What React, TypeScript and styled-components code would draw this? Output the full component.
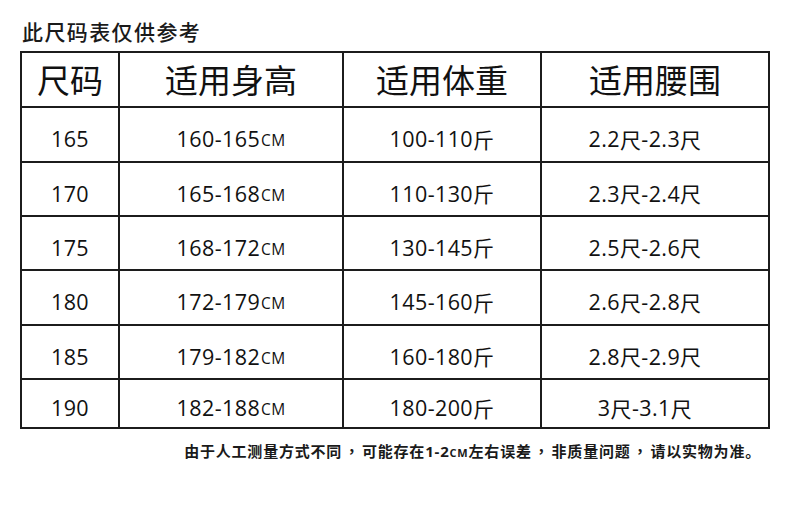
import React from "react";
import styled, { createGlobalStyle } from "styled-components";

const GlobalStyle = createGlobalStyle`
  html, body { margin: 0; padding: 0; background: #ffffff; }
  body { font-family: "Open Sans", "Noto Sans CJK SC", sans-serif; color: #111; }
`;

const Page = styled.div`
  width: 790px;
  height: 522px;
  box-sizing: border-box;
  padding: 21px 20px 0 20px;
  display: flex;
  flex-direction: column;
`;

const Title = styled.div`
  font-family: "Noto Sans CJK SC", sans-serif;
  font-size: 21px;
  line-height: 21px;
  font-weight: 500;
  letter-spacing: 1.4px;
  padding-left: 2px;
  color: #1a1a1a;
`;

const Grid = styled.div`
  margin-top: 9px;
  display: grid;
  grid-template-columns: 96px 222px 196px 226px;
  grid-template-rows: 53px 53px 52px 52px 53px 52px 47px;
  gap: 2px;
  padding: 2px;
  background: #1c1c1c;
  width: 750px;
  box-sizing: border-box;
`;

const HeadCell = styled.div`
  background: #fff;
  display: flex;
  align-items: center;
  justify-content: center;
  font-family: "Noto Sans CJK SC", sans-serif;
  font-size: 33px;
  font-weight: 400;
  color: #111;
  padding-bottom: 2px;
  box-sizing: border-box;
`;

const Cell = styled.div<{ $shift?: number }>`
  background: #fff;
  display: flex;
  align-items: center;
  justify-content: center;
  font-family: "Open Sans", "Noto Sans CJK SC", sans-serif;
  font-size: 21.5px;
  letter-spacing: 0.4px;
  color: #111;
  padding-top: 8px;
  padding-right: ${(p) => (p.$shift ? p.$shift : 0)}px;
  box-sizing: border-box;
`;

const Unit = styled.span`
  font-family: "Open Sans", sans-serif;
  font-size: 15.5px;
  letter-spacing: 0.3px;
  margin-left: 1px;
  padding-top: 3px;
`;

const Cjk = styled.span`
  font-family: "Noto Sans CJK SC", sans-serif;
  font-size: 21px;
`;

const Note = styled.div`
  margin-top: 14px;
  padding-right: 9px;
  text-align: right;
  font-family: "Noto Sans CJK SC", sans-serif;
  font-size: 15px;
  line-height: 15px;
  font-weight: 700;
  letter-spacing: 0.8px;
  color: #1a1a1a;
`;

const Comma = styled.span`
  font-family: "Noto Sans CJK TC", sans-serif;
  margin: 0 2px;
`;

const NoteUnit = styled.span`
  font-family: "Open Sans", sans-serif;
  font-size: 11px;
  font-weight: 700;
`;

const NoteNum = styled.span`
  font-family: "Open Sans", sans-serif;
  font-weight: 700;
`;

const rows = [
  { size: "165", h: "160-165", w: "100-110", a: "2.2", b: "2.3" },
  { size: "170", h: "165-168", w: "110-130", a: "2.3", b: "2.4" },
  { size: "175", h: "168-172", w: "130-145", a: "2.5", b: "2.6" },
  { size: "180", h: "172-179", w: "145-160", a: "2.6", b: "2.8" },
  { size: "185", h: "179-182", w: "160-180", a: "2.8", b: "2.9" },
  { size: "190", h: "182-188", w: "180-200", a: "3", b: "3.1" },
];

export default function App() {
  return (
    <>
      <GlobalStyle />
      <Page>
        <Title>此尺码表仅供参考</Title>
        <Grid>
          <HeadCell>尺码</HeadCell>
          <HeadCell>适用身高</HeadCell>
          <HeadCell>适用体重</HeadCell>
          <HeadCell>适用腰围</HeadCell>
          {rows.map((r) => (
            <React.Fragment key={r.size}>
              <Cell>{r.size}</Cell>
              <Cell>
                {r.h}
                <Unit>CM</Unit>
              </Cell>
              <Cell>
                {r.w}
                <Cjk>斤</Cjk>
              </Cell>
              <Cell $shift={20}>
                {r.a}
                <Cjk>尺</Cjk>-{r.b}
                <Cjk>尺</Cjk>
              </Cell>
            </React.Fragment>
          ))}
        </Grid>
        <Note>
          由于人工测量方式不同<Comma>，</Comma>可能存在<NoteNum>1-2</NoteNum>
          <NoteUnit>CM</NoteUnit>左右误差<Comma>，</Comma>非质量问题<Comma>，</Comma>请以实物为准。
        </Note>
      </Page>
    </>
  );
}
